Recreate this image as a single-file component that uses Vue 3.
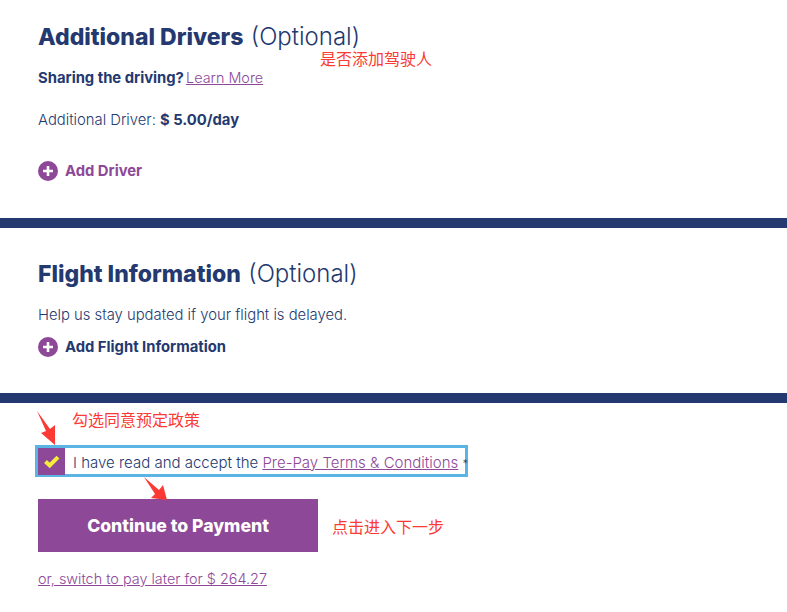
<script setup>
const purple = "#8e4898";
</script>

<template>
  <div class="page">
    <section class="block first">
      <h2><b>Additional Drivers</b> <span>(Optional)</span></h2>
      <p class="sharing"><b>Sharing the driving?</b> <a href="#">Learn More</a></p>
      <p class="rate">Additional Driver: <b>$ 5.00/day</b></p>
      <div class="add add-driver">
        <svg width="20" height="20" viewBox="0 0 20 20">
          <circle cx="10" cy="10" r="10" :fill="purple" />
          <path d="M10 5v10M5 10h10" stroke="#fff" stroke-width="2.6" />
        </svg>
        <b>Add Driver</b>
      </div>
    </section>
    <div class="rule"></div>
    <section class="block second">
      <h2><b>Flight Information</b> <span>(Optional)</span></h2>
      <p class="help">Help us stay updated if your flight is delayed.</p>
      <div class="add">
        <svg width="20" height="20" viewBox="0 0 20 20">
          <circle cx="10" cy="10" r="10" :fill="purple" />
          <path d="M10 5v10M5 10h10" stroke="#fff" stroke-width="2.6" />
        </svg>
        <b>Add Flight Information</b>
      </div>
    </section>
    <div class="rule"></div>
    <section class="block third">
      <div class="terms">
        <span class="check">
          <svg width="16" height="14" viewBox="0 0 16 14">
            <path d="M1.5 6.5l4.2 4L14 2.2" fill="none" stroke="#f6ec3c" stroke-width="4" />
          </svg>
        </span>
        <span class="terms-text">I have read and accept the <a href="#">Pre-Pay Terms &amp; Conditions</a> <i>*</i></span>
      </div>
      <button class="pay">Continue to Payment</button>
      <a class="later" href="#">or, switch to pay later for $ 264.27</a>
    </section>

    <!-- red notes drawn over the page -->
    <span class="note n1">是否添加驾驶人</span>
    <span class="note n2">勾选同意预定政策</span>
    <span class="note n3">点击进入下一步</span>
    <svg class="arrows" width="787" height="612" viewBox="0 0 787 612">
      <path d="M37 411L50 429L55 425L55 445L41 433L46 431Z" fill="#fb3a35" />
      <path d="M144 477L159 490L163 485L167 500L151 498L155 494Z" fill="#fb3a35" />
    </svg>
  </div>
</template>

<style scoped>
.page {
  position: relative;
  width: 787px;
  height: 612px;
  overflow: hidden;
  background: #fff;
  color: #23396f;
  font-family: "Inter", "Liberation Sans", sans-serif;
  font-size: 14.8px;
}
.block {
  padding-left: 38px;
}
.first {
  height: 218px;
  padding-top: 21px;
  box-sizing: border-box;
}
.second {
  height: 165px;
  padding-top: 30px;
  box-sizing: border-box;
}
.third {
  padding-top: 42px;
}
h2 {
  margin: 0;
  font-size: 23px;
  line-height: 32px;
  font-weight: 400;
  white-space: nowrap;
}
h2 b {
  font-weight: 800;
}
h2 span {
  font-weight: 300;
  font-size: 24px;
  margin-left: 1px;
}
p {
  margin: 0;
  line-height: 20px;
}
.sharing {
  margin-top: 15px;
}
.rate {
  margin-top: 22px;
  font-weight: 300;
}
.rate b,
.sharing b {
  font-weight: 700;
}
a {
  color: #8e4898;
  text-decoration: underline;
  font-weight: 300;
}
.sharing a {
  margin-left: -2px;
  font-size: 14.4px;
}
.help {
  margin-top: 15px;
  font-weight: 300;
}
.add {
  display: flex;
  align-items: center;
  gap: 7px;
  margin-top: 12px;
}
.add-driver {
  margin-top: 31px;
  color: #8e4898;
}
.terms {
  display: flex;
  align-items: flex-start;
  width: 427px;
  height: 26px;
  margin-left: -3px;
  border: 3px solid #5ab4e4;
}
.check {
  flex: none;
  display: flex;
  align-items: center;
  justify-content: center;
  width: 27px;
  height: 27px;
  background: #8e4898;
}
.terms-text {
  margin-left: 8px;
  padding-top: 5px;
  font-size: 15px;
  font-weight: 300;
  white-space: nowrap;
}
.terms-text i {
  font-style: normal;
  font-size: 11px;
}
.pay {
  display: block;
  width: 280px;
  height: 53px;
  margin-top: 22px;
  border: 0;
  background: #8e4898;
  color: #fff;
  font-family: inherit;
  font-size: 17.6px;
  font-weight: 800;
}
.later {
  display: block;
  margin-top: 17px;
  font-size: 14.4px;
  line-height: 20px;
}
.note {
  position: absolute;
  color: #fb3a35;
  font-family: "Noto Sans CJK SC", sans-serif;
  font-size: 16px;
  line-height: 20px;
  white-space: nowrap;
}
.n1 {
  left: 320px;
  top: 48px;
}
.n2 {
  left: 72px;
  top: 409px;
}
.n3 {
  left: 332px;
  top: 516px;
}
.arrows {
  position: absolute;
  left: 0;
  top: 0;
  pointer-events: none;
}
.rule {
  height: 10px;
  background: #23396f;
}
</style>
<style>
body {
  margin: 0;
}
</style>
